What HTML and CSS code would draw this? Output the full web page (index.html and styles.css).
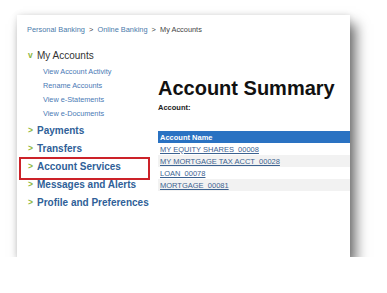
FILE: index.html
```html
<!DOCTYPE html>
<html lang="en">
<head>
    <link rel="stylesheet" href="styles.css">
</head>
<body>
    <div class="card">
        <div class="breadcrumb">
            <a href="#">Personal Banking</a>
            <span class="sep">&gt;</span>
            <a href="#">Online Banking</a>
            <span class="sep">&gt;</span>
            <span class="current">My Accounts</span>
        </div>

        <div class="columns">
            <div class="sidebar">
                <div class="group-title"><span class="chev open">v</span>My Accounts</div>
                <ul class="sub-links">
                    <li><a href="#">View Account Activity</a></li>
                    <li><a href="#">Rename Accounts</a></li>
                    <li><a href="#">View e-Statements</a></li>
                    <li><a href="#">View e-Documents</a></li>
                </ul>
                <ul class="nav">
                    <li><span class="chev">&gt;</span><a href="#">Payments</a></li>
                    <li><span class="chev">&gt;</span><a href="#">Transfers</a></li>
                    <li class="marked"><span class="chev">&gt;</span><a href="#">Account Services</a></li>
                    <li><span class="chev">&gt;</span><a href="#">Messages and Alerts</a></li>
                    <li><span class="chev">&gt;</span><a href="#">Profile and Preferences</a></li>
                </ul>
            </div>

            <div class="content">
                <h1>Account Summary</h1>
                <p class="account-label">Account:</p>
                <table class="accounts">
                    <tr><th>Account Name</th></tr>
                    <tr><td><a href="#">MY EQUITY SHARES&nbsp; 00008</a></td></tr>
                    <tr><td><a href="#">MY MORTGAGE TAX ACCT&nbsp; 00028</a></td></tr>
                    <tr><td><a href="#">LOAN&nbsp; 00078</a></td></tr>
                    <tr><td><a href="#">MORTGAGE&nbsp; 00081</a></td></tr>
                </table>
            </div>
        </div>
    </div>
</body>
</html>
```

FILE: styles.css
```css
* {
    margin: 0;
    padding: 0;
    box-sizing: border-box;
}
body {
    background-color: #ffffff;
    font-family: "Liberation Sans", Arial, sans-serif;
    color: #333333;
}
.card {
    margin: 15px 0 0 17px;
    width: 333px;
    height: 242px;
    padding: 9px 0 0 10px;
    background-color: #ffffff;
    box-shadow: 6px 9px 12px rgba(0, 0, 0, 0.55), 0px 0px 6px rgba(0, 0, 0, 0.12);
    overflow: hidden;
}
a {
    text-decoration: none;
}
.breadcrumb {
    font-size: 7.4px;
    line-height: 12px;
    color: #444444;
}
.breadcrumb a {
    color: #4a7bab;
}
.breadcrumb .sep {
    margin: 0 2px;
    color: #444444;
}
.columns {
    display: flex;
    margin-top: 12px;
}
.sidebar {
    width: 131px;
    flex-shrink: 0;
}
.chev {
    display: inline-block;
    width: 10px;
    padding-left: 1px;
    font-size: 8.5px;
    font-weight: bold;
    color: #8cb63c;
}
.group-title {
    display: flex;
    align-items: center;
    height: 14px;
    font-size: 10px;
    color: #333333;
}
.sub-links {
    list-style: none;
    margin-top: 3px;
    padding-left: 16px;
}
.sub-links li {
    font-size: 7.3px;
    line-height: 14px;
}
.sub-links a {
    color: #4a7ab5;
}
.nav {
    list-style: none;
}
.nav li {
    position: relative;
    display: flex;
    align-items: center;
    height: 18px;
    font-size: 10px;
    font-weight: bold;
}
.nav a {
    color: #2f5f98;
}
.nav .marked::after {
    content: "";
    position: absolute;
    left: -8px;
    top: 0px;
    width: 127px;
    height: 19px;
    border: 2px solid #cc2229;
}
.content {
    flex: 1;
    padding-top: 28px;
}
h1 {
    font-size: 20px;
    line-height: 24px;
    font-weight: bold;
    color: #111111;
}
.account-label {
    margin-top: 3px;
    font-size: 7.5px;
    line-height: 10px;
    font-weight: bold;
    color: #222222;
}
.accounts {
    margin-top: 18px;
    width: 100%;
    border-collapse: collapse;
    font-size: 7.5px;
}
.accounts th {
    background-color: #2a72c2;
    color: #ffffff;
    text-align: left;
    font-weight: bold;
    height: 12px;
    padding: 0 2px;
}
.accounts td {
    height: 12px;
    padding: 0 2px;
}
.accounts tr:nth-child(odd) td {
    background-color: #f2f2f2;
}
.accounts td a {
    color: #3c6290;
    text-decoration: underline;
}
```
